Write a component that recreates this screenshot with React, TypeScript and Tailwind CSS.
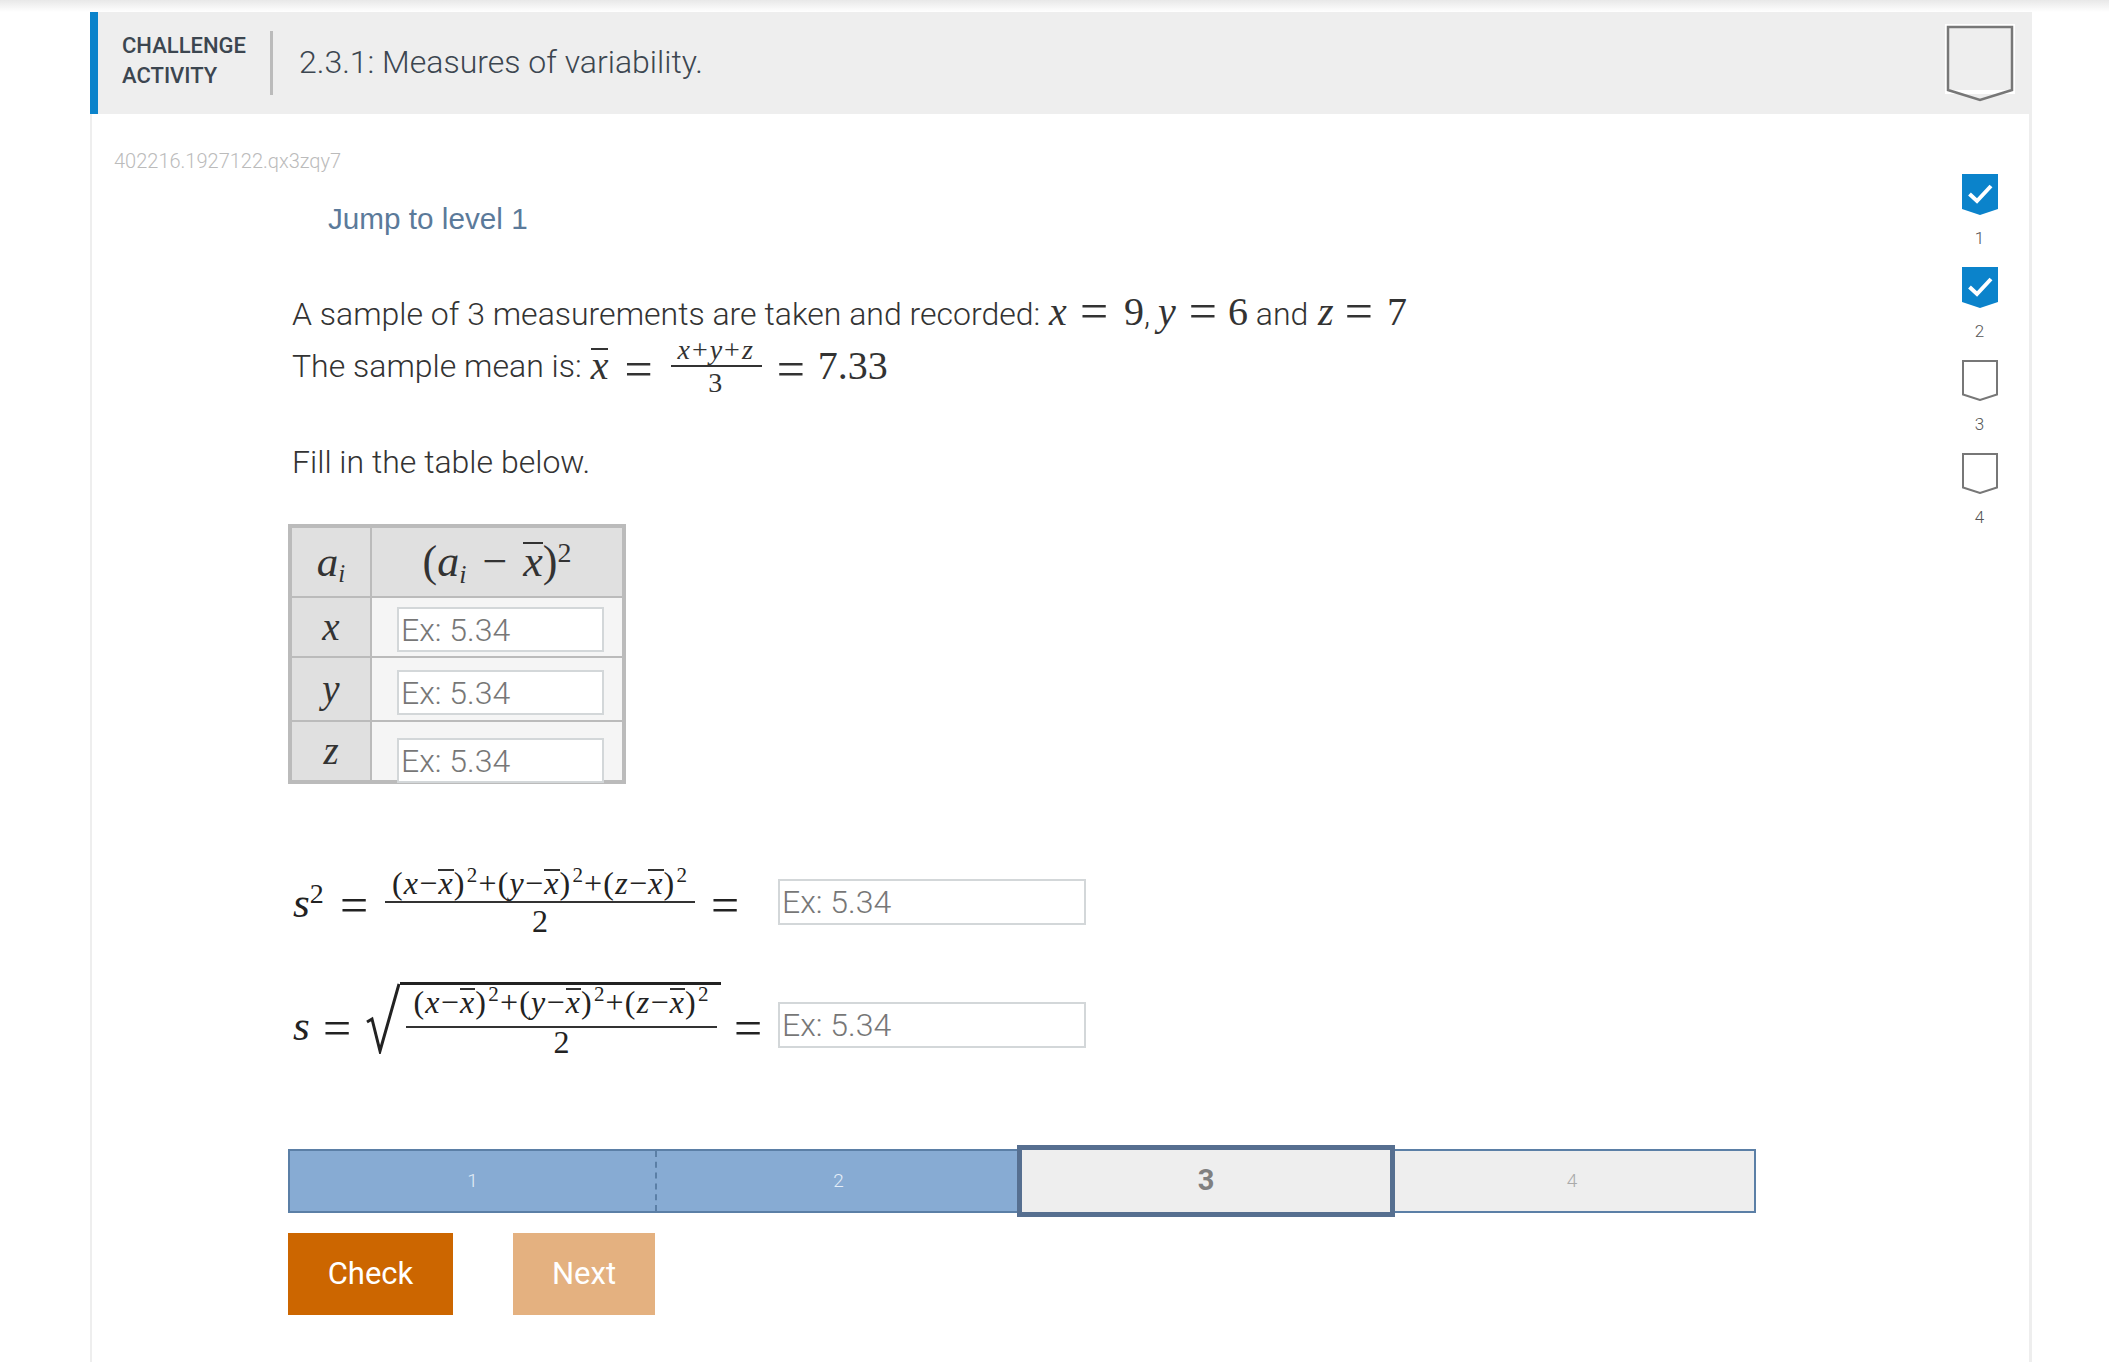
import type { ReactNode } from 'react';

const roboto = 'font-["Roboto","Liberation_Sans",sans-serif]';
const serif = 'font-["Liberation_Serif","DejaVu_Serif",serif]';

function V({ children }: { children: ReactNode }) {
  return <i className={serif}>{children}</i>;
}

function Eq({ className = '' }: { className?: string }) {
  return <span className={`inline-block text-[50px] leading-none relative top-[3px] ${serif} ${className}`}>=</span>;
}

// x with a bar on top
function XBar() {
  return (
    <span className="inline-block border-t-[2px] border-[#333] leading-[0.8]">
      <V>x</V>
    </span>
  );
}

function Frac({
  top,
  bottom,
  className,
  topClass = '',
  bottomClass = '',
}: {
  top: ReactNode;
  bottom: ReactNode;
  className: string;
  topClass?: string;
  bottomClass?: string;
}) {
  return (
    <span className={`inline-flex flex-col items-center ${serif} ${className}`}>
      <span className={`w-full border-b-[2px] border-[#333] text-center whitespace-nowrap ${topClass}`}>{top}</span>
      <span className={`text-center ${bottomClass}`}>{bottom}</span>
    </span>
  );
}

function Sq({ v }: { v: string }) {
  return (
    <>
      (<V>{v}</V>−<XBar />)<sup className="text-[21px] leading-none -top-[12px] relative align-baseline ml-[1px]">2</sup>
    </>
  );
}

function SumOfSquares() {
  return (
    <span className="tracking-[1.2px]">
      <Sq v="x" />+<Sq v="y" />+<Sq v="z" />
    </span>
  );
}

function AnswerInput({ className }: { className: string }) {
  return (
    <input
      type="text"
      placeholder="Ex: 5.34"
      className={`bg-white border-2 border-[#d3d7d9] px-[2px] text-[32px] font-light outline-none placeholder:text-[#777] ${roboto} ${className}`}
    />
  );
}

function Badge({ done, n }: { done: boolean; n: number }) {
  return (
    <div className="flex flex-col items-center h-[93px]">
      <svg width="36" height="41" viewBox="0 0 36 41">
        {done ? (
          <>
            <path d="M0 0H36V35L18 41L0 35Z" fill="#0b83cb" />
            <path d="M7.5 20L15 27L29 12" fill="none" stroke="#fff" strokeWidth="4" />
          </>
        ) : (
          <path d="M1 1H35V34.5L18 40L1 34.5Z" fill="#fff" stroke="#777" strokeWidth="2" />
        )}
      </svg>
      <span className={`mt-[13px] text-[17px] leading-5 font-light text-[#555] ${roboto}`}>{n}</span>
    </div>
  );
}

function TableRow({ v, rowClass, padClass, inputClass }: { v: string; rowClass: string; padClass: string; inputClass: string }) {
  return (
    <div className={`flex ${rowClass}`}>
      <div className={`w-[80px] border-r-2 border-[#bbb] bg-[#e0e0e0] flex items-center justify-center text-[39px] text-[#333] ${serif}`}>
        <V>{v}</V>
      </div>
      <div className={`flex-1 bg-[#f5f5f5] pl-[25px] ${padClass}`}>
        <AnswerInput className={`w-[207px] ${inputClass}`} />
      </div>
    </div>
  );
}

function StepCell({ n, className }: { n: number; className: string }) {
  return <div className={`flex items-center justify-center ${roboto} ${className}`}>{n}</div>;
}

export default function App() {
  return (
    <div className="w-full h-[1362px] overflow-hidden bg-white">
      <div className="h-[12px] bg-gradient-to-b from-[#e8e8e8] to-white" />
      <div className="ml-[90px] w-[1942px]">
        {/* Header */}
        <div className="h-[102px] bg-[#eee] border-l-[8px] border-[#0b83cb] flex items-center relative">
          <div className={`ml-[24px] -mt-[4px] w-[148px] text-[22px] leading-[30px] font-medium text-[#3c4650] ${roboto}`}>
            CHALLENGE
            <br />
            ACTIVITY
          </div>
          <div className="w-[3px] h-[64px] bg-[#bbb]" />
          <div className={`ml-[26px] -mt-[2px] text-[32px] font-light text-[#3c4650] ${roboto}`}>2.3.1: Measures of variability.</div>
          <svg width="70" height="78" viewBox="0 0 70 78" className="absolute right-[17px] top-[12px]">
            <path d="M0 0H70V70H0Z" fill="#fff" />
            <path d="M3 3H67V66H3Z" fill="#eee" />
            <path d="M3 3H67V66L35 76L3 66Z" fill="none" stroke="#777" strokeWidth="2.5" />
          </svg>
        </div>

        {/* Body */}
        <div className="flex h-[1248px] border-l-[2px] border-r-[3px] border-[#eee]">
          <div className="flex-1 pt-[34px]">
            <div className={`pl-[22px] h-[26px] text-[20px] leading-[26px] font-light text-[#bbb] ${roboto}`}>402216.1927122.qx3zqy7</div>
            <div className="pl-[196px]">
              <div className="mt-[27px] pl-[40px] h-[36px] leading-[36px] text-[29.7px] text-[#5b7a9a] font-['Liberation_Sans',sans-serif]">
                Jump to level 1
              </div>

              <div className={`mt-[46px] pl-[4px] h-[55px] leading-[50px] text-[32px] font-light text-[#333] whitespace-nowrap ${roboto}`}>
                A sample of 3 measurements are taken and recorded:{' '}
                <span className={`ml-[1px] text-[40px] ${serif}`}>
                  <V>x</V>
                  <Eq className="ml-[13px] mr-[16px]" />9
                </span>
                ,{' '}
                <span className={`text-[40px] ${serif}`}>
                  <V>y</V>
                  <Eq className="ml-[13px] mr-[11px]" />6
                </span>{' '}
                and{' '}
                <span className={`ml-[2px] text-[40px] ${serif}`}>
                  <V>z</V>
                  <Eq className="ml-[11px] mr-[14px]" />7
                </span>
              </div>

              <div className={`pl-[4px] h-[56px] flex items-center text-[32px] font-light text-[#333] whitespace-nowrap ${roboto}`}>
                The sample mean is:
                <span className={`ml-[9px] text-[40px] ${serif}`}>
                  <XBar />
                </span>
                <Eq className="ml-[16px]" />
                <Frac
                  className="ml-[18px] w-[91px] text-[28px] leading-[31px] tracking-[2px]"
                  top={
                    <>
                      <V>x</V>+<V>y</V>+<V>z</V>
                    </>
                  }
                  bottom="3"
                />
                <Eq className="ml-[15px]" />
                <span className={`ml-[13px] text-[40px] ${serif}`}>7.33</span>
              </div>

              <div className={`mt-[48px] pl-[4px] h-[40px] leading-[40px] text-[32px] font-light text-[#333] ${roboto}`}>
                Fill in the table below.
              </div>

              {/* Table */}
              <div className="mt-[42px] w-[338px] h-[260px] border-[4px] border-[#bbb]">
                <div className="flex h-[70px] border-b-2 border-[#bbb] bg-[#e0e0e0]">
                  <div className={`w-[80px] border-r-2 border-[#bbb] flex items-center justify-center text-[43px] text-[#333] ${serif}`}>
                    <span>
                      <V>a</V>
                      <sub className="text-[25px] italic">i</sub>
                    </span>
                  </div>
                  <div className={`flex-1 flex items-center justify-center text-[44px] text-[#333] ${serif}`}>
                    <span className="whitespace-nowrap">
                      (<V>a</V>
                      <sub className="text-[26px] italic">i</sub>
                      <span className="mx-[16px]">−</span>
                      <XBar />)<sup className="text-[28px]">2</sup>
                    </span>
                  </div>
                </div>
                <TableRow v="x" rowClass="h-[60px] border-b-2 border-[#bbb]" padClass="pt-[9px]" inputClass="h-[45px]" />
                <TableRow v="y" rowClass="h-[64px] border-b-2 border-[#bbb]" padClass="pt-[12px]" inputClass="h-[45px]" />
                <TableRow v="z" rowClass="h-[58px]" padClass="pt-[16px]" inputClass="h-[45px]" />
              </div>

              {/* s squared */}
              <div className={`mt-[73px] h-[90px] flex items-center text-[#222] ${serif}`}>
                <span className="ml-[5px] w-[47px] text-[43px] leading-none">
                  <V>s</V>
                  <sup className="text-[28px]">2</sup>
                </span>
                <Eq className="w-[45px]" />
                <Frac className="w-[310px] text-[32px] leading-[36px]" top={<SumOfSquares />} bottom="2" />
                <Eq className="ml-[16px] w-[67px]" />
                <AnswerInput className="w-[308px] h-[46px]" />
              </div>

              {/* s */}
              <div className={`mt-[30px] h-[96px] flex items-center text-[#222] ${serif}`}>
                <span className="ml-[5px] w-[30px] text-[43px] leading-none">
                  <V>s</V>
                </span>
                <Eq className="w-[43px]" />
                <svg width="34" height="72" viewBox="0 0 34 72" className="shrink-0 mb-[14px]">
                  <path d="M1 40L6 37L14 69L33 2" fill="none" stroke="#222" strokeWidth="3" />
                </svg>
                <span className="border-t-[3px] border-[#222] pl-[6px] pr-[4px] h-[74px] -mt-[12px]">
                  <Frac
                    className="w-[311px] text-[32px]"
                    topClass="leading-[34px] pb-[7px]"
                    bottomClass="leading-[28px]"
                    top={<SumOfSquares />}
                    bottom="2"
                  />
                </span>
                <Eq className="ml-[13px] w-[44px]" />
                <AnswerInput className="w-[308px] h-[46px]" />
              </div>

              {/* Levels */}
              <div className="mt-[76px] w-[1468px] h-[64px] border-2 border-[#5b7fa6] flex">
                <StepCell n={1} className="w-[367px] bg-[#87abd3] border-r-2 border-dashed border-[#5b7fa6] text-[19px] font-light text-[#e4eef8]" />
                <StepCell n={2} className="w-[360px] pl-[3px] bg-[#87abd3] text-[19px] font-light text-[#e4eef8]" />
                <StepCell n={3} className="w-[378px] -my-[6px] z-10 bg-[#eee] border-[5px] border-[#566f90] text-[29px] font-bold text-[#808080]" />
                <StepCell n={4} className="flex-1 pr-[5px] bg-[#eee] text-[19px] font-light text-[#aaa]" />
              </div>

              <div className={`mt-[20px] flex text-[31px] text-white ${roboto}`}>
                <button type="button" className="w-[165px] h-[82px] bg-[#cc6600]">
                  Check
                </button>
                <button type="button" className="ml-[60px] w-[142px] h-[82px] bg-[#e4b180]">
                  Next
                </button>
              </div>
            </div>
          </div>

          {/* Level badges */}
          <div className="w-[99px] pt-[60px]">
            <Badge done n={1} />
            <Badge done n={2} />
            <Badge done={false} n={3} />
            <Badge done={false} n={4} />
          </div>
        </div>
      </div>
    </div>
  );
}
